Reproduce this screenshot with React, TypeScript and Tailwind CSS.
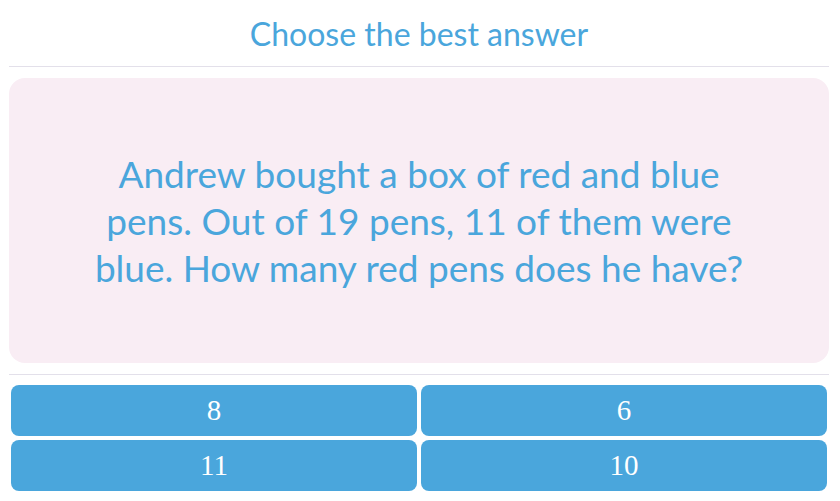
const answers = ["8", "6", "11", "10"];

export default function App() {
  return (
    <div className="min-h-screen w-full bg-white pl-[9px] pr-[11px] font-['Lato',sans-serif]">
      <header className="flex h-[67px] items-center justify-center border-b border-[#e3e0ea]">
        <h1 className="text-[32px] leading-none text-[#4aa6dc] pt-[2px]">Choose the best answer</h1>
      </header>

      <div className="pt-[11px] pb-[11px] border-b border-[#e3e0ea]">
        <section className="flex h-[285px] items-center justify-center rounded-[16px] bg-[#f9edf4] px-6">
          <p className="max-w-[680px] text-center text-[37px] leading-[47px] text-[#4aa6dc]">
            Andrew bought a box of red and blue pens. Out of 19 pens, 11 of them were blue. How many red pens does he have?
          </p>
        </section>
      </div>

      <div className="grid grid-cols-2 pt-[8px]">
        {answers.map((a) => (
          <button
            key={a}
            className="m-[2px] h-[51px] rounded-[8px] bg-[#4aa6dc] font-['Liberation_Serif',serif] text-[29px] text-white"
          >
            {a}
          </button>
        ))}
      </div>
    </div>
  );
}
